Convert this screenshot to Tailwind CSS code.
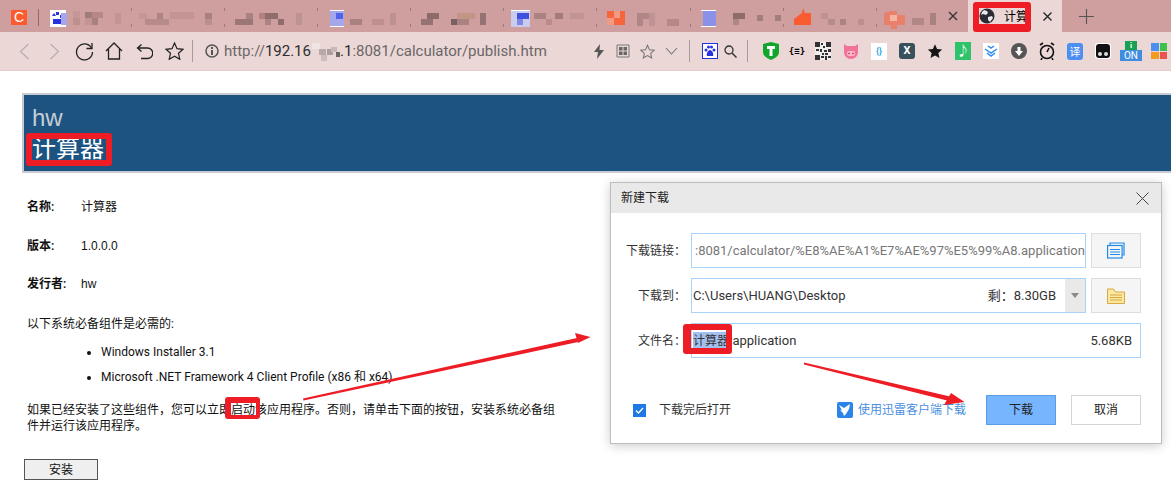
<!doctype html>
<html lang="zh-CN">
  <head>
    <meta charset="UTF-8" />
    <title>计算器</title>
    <script src="https://cdn.jsdelivr.net/npm/@tailwindcss/browser@4"></script>
  </head>
  <body class="relative w-[1171px] h-[495px] overflow-hidden bg-white text-black font-['Roboto','Noto_Sans_CJK_SC',sans-serif]">
    <!-- Tab strip -->
    <div class="flex items-start h-[32px] bg-[#cf9e9e]">
      <div class="ml-[11px] mt-[10px] w-[16px] h-[15px] bg-[#fc5a2d] text-white text-[14px] leading-[15px] text-center font-['Liberation_Sans']">C</div>
      <div class="ml-[11px] mt-[9px] w-px h-[17px] bg-[#8f6a6a]"></div>
      <svg class="w-[929px] h-[32px] shrink-0" viewBox="39 0 929 32">
        <g fill="#b98c8c">
          <rect x="73" y="11" width="7" height="7" fill="#c49696"/><rect x="85" y="12" width="7" height="6" fill="#a17c7c"/><rect x="92" y="12" width="11" height="6" fill="#b58787"/><rect x="73" y="18" width="7" height="7" fill="#bd9090"/><rect x="85" y="18" width="7" height="7" fill="#c29494"/><rect x="92" y="18" width="6" height="7" fill="#a98080"/><rect x="115" y="13" width="6" height="11" fill="#c19595"/>
          <rect x="139" y="13" width="8" height="6" fill="#c39797"/><rect x="145" y="19" width="24" height="6" fill="#b88b8b"/><rect x="157" y="13" width="6" height="6" fill="#ad8585"/><rect x="170" y="12" width="24" height="7" fill="#c29494"/><rect x="205" y="13" width="7" height="6" fill="#a78080"/><rect x="205" y="19" width="7" height="6" fill="#bb8f8f"/>
          <rect x="235" y="19" width="18" height="6" fill="#9c7676"/><rect x="246" y="13" width="7" height="6" fill="#a98181"/><rect x="259" y="13" width="7" height="6" fill="#b58080"/><rect x="265" y="13" width="13" height="6" fill="#8f6d6d"/><rect x="265" y="19" width="6" height="6" fill="#ab8383"/><rect x="278" y="19" width="6" height="6" fill="#8f6d6d"/><rect x="296" y="13" width="6" height="12" fill="#bd9292"/>
          <rect x="350" y="19" width="12" height="6" fill="#a98181"/><rect x="372" y="19" width="12" height="6" fill="#bd8f8f"/><rect x="390" y="13" width="6" height="12" fill="#bd9191"/>
          <rect x="421" y="19" width="12" height="6" fill="#967272"/><rect x="427" y="13" width="12" height="6" fill="#8e6b6b"/><rect x="451" y="19" width="6" height="6" fill="#776060"/><rect x="457" y="13" width="18" height="6" fill="#c39585"/><rect x="457" y="19" width="12" height="6" fill="#ab8282"/><rect x="480" y="13" width="6" height="12" fill="#967373"/>
          <rect x="534" y="13" width="12" height="6" fill="#ab8282"/><rect x="546" y="19" width="6" height="6" fill="#b98b8b"/><rect x="555" y="13" width="8" height="6" fill="#a57c7c"/><rect x="570" y="13" width="14" height="6" fill="#c19494"/>
          <rect x="637" y="13" width="12" height="6" fill="#b08686"/><rect x="637" y="19" width="6" height="7" fill="#b08686"/><rect x="649" y="13" width="6" height="13" fill="#bd9393"/><rect x="667" y="19" width="12" height="7" fill="#b58888"/>
          <rect x="733" y="13" width="12" height="6" fill="#8e6c6c"/><rect x="733" y="19" width="6" height="6" fill="#b08787"/><rect x="757" y="15" width="6" height="6" fill="#a47e7e"/><rect x="775" y="15" width="6" height="6" fill="#a47e7e"/>
          <rect x="821" y="13" width="7" height="6" fill="#bf9292"/><rect x="828" y="19" width="7" height="6" fill="#b58b8b"/><rect x="840" y="19" width="6" height="6" fill="#ab8383"/><rect x="858" y="19" width="6" height="6" fill="#bb8f8f"/>
          <rect x="912" y="18" width="12" height="7" fill="#b18787"/><rect x="930" y="13" width="6" height="12" fill="#a88181"/>
        </g>
        <!-- tab separators, mostly blurred away -->
        <path d="M131.500 8v3M131.500 24v3M224.500 8v3M224.500 24v3M317.500 8v3M317.500 24v3M410.500 8v3M410.500 24v3M503.500 8v3M503.500 24v3M596.500 8v3M596.500 24v3M690.500 8v3M690.500 24v3M783.500 8v3M783.500 24v3M876.500 8v3M876.500 24v3" stroke="#9a7777" stroke-width="1" />
        <!-- baidu favicon -->
        <rect x="50" y="10" width="16" height="17" fill="#fff"/>
        <path d="M52 16l2-3 2 3zM56 12h3v3h-3zM60 15h3v3h-3zM53 19h8l1 5h-9z" fill="#2932e1"/>
        <rect x="61" y="13" width="6" height="12" fill="#a6a6ee"/>
        <!-- blue favicons -->
        <rect x="330" y="10" width="14" height="17" fill="#a4a8ea"/><rect x="330" y="10" width="14" height="1" fill="#fff"/><rect x="330" y="26" width="14" height="1" fill="#fff"/><rect x="336" y="13" width="7" height="6" fill="#5363e8"/>
        <rect x="511" y="11" width="19" height="16" fill="#c9ccee"/><rect x="511" y="10" width="19" height="1" fill="#fff"/><rect x="517" y="13" width="12" height="6" fill="#3f50dd"/><rect x="517" y="19" width="6" height="6" fill="#7d88e6"/>
        <rect x="703" y="11" width="13" height="15" fill="#8b90e8"/><rect x="701" y="10" width="15" height="1" fill="#fff"/><rect x="701" y="26" width="15" height="1" fill="#fff"/>
        <!-- orange favicons -->
        <rect x="607" y="11" width="18" height="14" fill="#f6653c"/><rect x="607" y="18" width="7" height="7" fill="#ef9b85"/><rect x="614" y="11" width="6" height="7" fill="#ef9b85"/>
        <path d="M794 19l8-6 1-5 2 5h6v12h-17z" fill="#fa5b30"/>
        <path d="M884 13l7-2h6v4h8v10h-8v4h-6v-4h-7z" fill="#e8806a"/><rect x="890" y="15" width="7" height="6" fill="#f5b3a4"/>
        <path d="M949 12l8 8M957 12l-8 8" stroke="#333" stroke-width="1.300" fill="none"/>
      </svg>
      <!-- Active tab -->
      <div class="w-[94px] h-[32px] shrink-0 bg-[#ead7d6] flex items-center">
        <svg class="ml-[11px] w-[16px] h-[16px]" viewBox="0 0 16 16"><circle cx="8" cy="8" r="7.500" fill="#2b2b33"/><path d="M5 2l3 1 1 2-2 2-3-1-2 1 1-3zM9 9l4-1 1 2-3 4-2-2z" fill="#e8e8ee"/></svg>
        <span class="ml-[9px] text-[12px] leading-none font-['Noto_Sans_CJK_SC']">计算</span>
        <svg class="ml-[15px] w-[9px] h-[9px]" viewBox="0 0 9 9"><path d="M.5.500l8 8M8.500.500l-8 8" stroke="#222" stroke-width="1.300"/></svg>
      </div>
      <svg class="ml-[17px] mt-[9px] w-[15px] h-[15px]" viewBox="0 0 15 15"><path d="M7.500 0v15M0 7.500h15" stroke="#555" stroke-width="1.100"/></svg>
    </div>

    <!-- Toolbar -->
    <div class="flex items-center h-[39px] bg-[#ead7d6] border-b border-[#e2cbcb]">
      <div class="flex items-center w-[192px] pl-[9px]">
        <span class="w-[30px] flex justify-center"><svg class="w-[11px] h-[17px]" viewBox="0 0 11 17" fill="none"><path d="M9.500 1l-8 7.500 8 7.500" stroke="#b9adad" stroke-width="1.200"/></svg></span>
        <span class="w-[30px] flex justify-center"><svg class="w-[11px] h-[17px]" viewBox="0 0 11 17" fill="none"><path d="M1.500 1l8 7.500-8 7.500" stroke="#b9adad" stroke-width="1.200"/></svg></span>
        <span class="w-[30px] flex justify-center"><svg class="w-[19px] h-[19px]" viewBox="0 0 19 19" fill="none"><path d="M16.500 6A8 8 0 1 0 17.500 10" stroke="#222" stroke-width="1.300"/><path d="M17 1v5.500h-5.500" stroke="#222" stroke-width="1.300"/></svg></span>
        <span class="w-[30px] flex justify-center"><svg class="w-[18px] h-[18px]" viewBox="0 0 18 18" fill="none"><path d="M1 9l8-8 8 8M3.500 7v10h11V7" stroke="#222" stroke-width="1.300"/></svg></span>
        <span class="w-[30px] flex justify-center"><svg class="w-[17px] h-[17px]" viewBox="0 0 17 17" fill="none"><path d="M5.500 1.500L1.500 5l4 3.500M2 5h9.500a4.500 4.500 0 0 1 0 10.500H5" stroke="#222" stroke-width="1.300"/></svg></span>
        <span class="w-[30px] flex justify-center"><svg class="w-[19px] h-[18px]" viewBox="0 0 19 18" fill="none"><path d="M9.500 1l2.500 5.700 6 .6-4.500 4 1.300 6-5.300-3.100-5.300 3.100 1.300-6L1 7.300l6-.6z" stroke="#222" stroke-width="1.200"/></svg></span>
      </div>
      <div class="w-px h-[22px] bg-[#a89a9a]"></div>
      <svg class="ml-[12px] w-[14px] h-[14px]" viewBox="0 0 14 14"><circle cx="7" cy="7" r="6" fill="none" stroke="#555" stroke-width="1.500"/><rect x="6" y="6" width="2" height="5" fill="#555"/><rect x="6" y="3" width="2" height="2" fill="#555"/></svg>
      <div class="ml-[5px] flex items-center text-[15px] text-[#6b6666] whitespace-nowrap">
        <span>http://</span><span class="text-[#2d2d2d]">192.16</span>
        <svg class="w-[29px] h-[20px]" viewBox="0 0 29 20"><rect x="1" y="2" width="8" height="6" fill="#f1e4e4"/><rect x="8" y="8" width="7" height="6" fill="#b9aaaa"/><rect x="16" y="8" width="6" height="6" fill="#ad9d9d"/><rect x="10" y="14" width="6" height="6" fill="#cdbcbc"/><rect x="20" y="6" width="6" height="5" fill="#c8b9b9"/><rect x="25" y="11" width="4" height="5" fill="#6b6666"/></svg>
        <span class="text-[#2d2d2d]">.1</span><span>:8081/calculator/publish.htm</span>
      </div>
      <div class="flex items-center ml-auto pr-[4px]">
        <span class="w-[28px] flex justify-center"><svg class="w-[10px] h-[15px]" viewBox="0 0 10 15"><path d="M6 0L0 8h4l-1 7 7-9H5.500z" fill="#555"/></svg></span>
        <span class="w-[20px] flex justify-center"><svg class="w-[14px] h-[14px]" viewBox="0 0 14 14" fill="#666"><path d="M1 1h12v12H1z" fill="none" stroke="#777"/><rect x="3" y="3" width="3.500" height="3.500"/><rect x="7.500" y="3" width="3.500" height="3.500"/><rect x="3" y="7.500" width="3.500" height="3.500"/><rect x="7.500" y="7.500" width="3.500" height="3.500"/></svg></span>
        <span class="w-[28px] flex justify-center"><svg class="w-[15px] h-[15px]" viewBox="0 0 19 18" fill="none"><path d="M9.500 1l2.500 5.700 6 .6-4.500 4 1.300 6-5.300-3.100-5.300 3.100 1.300-6L1 7.300l6-.6z" stroke="#777" stroke-width="1.300"/></svg></span>
        <span class="w-[20px] flex justify-center"><svg class="w-[13px] h-[8px]" viewBox="0 0 13 8" fill="none"><path d="M1 1l5.500 6L12 1" stroke="#777" stroke-width="1.100"/></svg></span>
        <div class="ml-[8px] w-px h-[22px] bg-[#a89a9a]"></div>
        <span class="ml-[12px] w-[16px] h-[16px] border border-[#2233dd] bg-white flex items-center justify-center"><svg class="w-[12px] h-[12px]" viewBox="0 0 12 12" fill="#2932e1"><circle cx="2" cy="5" r="1.500"/><circle cx="4.500" cy="2" r="1.500"/><circle cx="7.500" cy="2" r="1.500"/><circle cx="10" cy="5" r="1.500"/><path d="M6 5c2 0 4 4 3 6H3c-1-2 1-6 3-6z"/></svg></span>
        <svg class="ml-[6px] w-[13px] h-[13px]" viewBox="0 0 13 13" fill="none"><circle cx="5" cy="5" r="4" stroke="#333" stroke-width="1.300"/><path d="M8 8l4.500 4.500" stroke="#333" stroke-width="1.500"/></svg>
        <div class="ml-[10px] w-px h-[22px] bg-[#a89a9a]"></div>
        <span class="ml-[15px] w-[16px] flex justify-center"><svg class="w-[16px] h-[18px]" viewBox="0 0 16 18"><path d="M8 0l8 2v8c0 4-4 6-8 8-4-2-8-4-8-8V2z" fill="#12a52c"/><path d="M4 4h8v3H9.500v7h-3V7H4z" fill="#fff"/></svg></span>
        <span class="ml-[8px] w-[20px] text-center text-[9px] font-bold font-['DejaVu_Sans_Mono'] leading-none">{≡}</span>
        <svg class="ml-[8px] w-[16px] h-[18px]" viewBox="0 0 16 18"><rect width="16" height="18" fill="#eee"/><path d="M0 0h5v5H0zM11 0h5v5h-5zM0 13h5v5H0zM6 1h2v2H6zM8 4h2v2H8zM1 7h3v2H1zM5 7h2v3H5zM9 8h3v2H9zM13 7h3v3h-3zM7 11h2v2H7zM10 11h3v2h-3zM6 14h3v2H6zM10 14h2v4h-2zM13 14h3v2h-3z" fill="#333"/></svg>
        <svg class="ml-[12px] w-[16px] h-[15px]" viewBox="0 0 16 15"><path d="M1 0l3 2h8l3-2v8c0 4-3 7-7 7s-7-3-7-7z" fill="#f0739a"/><rect x="4" y="7" width="8" height="5" rx="2" fill="#fbb4c8"/><circle cx="6" cy="9.500" r=".8" fill="#b33"/><circle cx="10" cy="9.500" r=".8" fill="#b33"/></svg>
        <span class="ml-[12px] w-[16px] h-[17px] bg-white text-[#2aa4e8] text-[9px] leading-[17px] text-center font-bold">{}</span>
        <span class="ml-[12px] w-[16px] h-[16px] rounded-[3px] bg-[#36505c] text-white text-[11px] leading-[16px] text-center font-bold">X</span>
        <svg class="ml-[12px] w-[16px] h-[16px]" viewBox="0 0 19 18"><path d="M9.500 1l2.500 5.700 6 .6-4.500 4 1.300 6-5.300-3.100-5.300 3.100 1.300-6L1 7.300l6-.6z" fill="#161616"/></svg>
        <span class="ml-[12px] w-[16px] h-[18px] bg-[#2ec36b] text-white text-[13px] leading-[18px] text-center">♪</span>
        <svg class="ml-[12px] w-[16px] h-[16px] bg-white" viewBox="0 0 16 16" fill="none" stroke="#2a8cf0" stroke-width="1.500"><path d="M5 3l3 2 3-2M2 6l6 4 6-4M4 10l4 3 4-3"/></svg>
        <span class="ml-[12px] w-[16px] h-[16px] rounded-full bg-[#555] flex justify-center items-center"><svg class="w-[8px] h-[9px]" viewBox="0 0 8 9"><path d="M2.500 0h3v4H8L4 9 0 4h2.500z" fill="#fff"/></svg></span>
        <svg class="ml-[12px] w-[16px] h-[18px]" viewBox="0 0 16 18" fill="none" stroke="#111" stroke-width="1.600"><circle cx="8" cy="10" r="6.500"/><path d="M8 10l2-4M1 3l3-2M15 3l-3-2M3 16l-1 2M13 16l1 2"/></svg>
        <span class="ml-[12px] w-[16px] h-[17px] rounded-[3px] bg-[#4d8ff0] text-white text-[11px] leading-[17px] text-center font-['Noto_Sans_CJK_SC']">译</span>
        <svg class="ml-[12px] w-[16px] h-[16px]" viewBox="0 0 16 16"><rect width="16" height="16" rx="3" fill="#fff"/><rect x="1" y="1" width="14" height="14" rx="3" fill="#111"/><circle cx="5" cy="11" r="2" fill="#ddd"/><circle cx="11" cy="11" r="2" fill="#ddd"/></svg>
        <span class="ml-[12px] w-[16px] flex flex-col items-center leading-none">
          <span class="w-[12px] h-[9px] bg-[#1aa053] text-white text-[8px] leading-[9px] text-center font-bold">i</span>
          <span class="w-[22px] h-[11px] shrink-0 bg-[#3f8de0] text-white text-[10px] leading-[11px] text-center">ON</span>
        </span>
        <span class="ml-[12px] w-[16px] h-[16px] grid grid-cols-2 gap-px">
          <span class="bg-[#4d8ff0]"></span><span class="bg-[#3cc14a]"></span><span class="bg-[#f39a1f]"></span><span class="bg-[#ef5350]"></span>
        </span>
      </div>
    </div>

    <!-- Publish page -->
    <div class="pl-[22px] pt-[22px] text-[12px] leading-[16px] text-[#111]">
      <div class="w-[1200px] h-[80px] bg-[#1c5380] border-2 border-[#c9c9d1] pl-[8px] pt-[7px]">
        <div class="text-[24px] leading-[31px] text-[#c6ccd5] font-['Liberation_Sans']">hw</div>
        <div class="text-[24px] leading-[32px] text-white">计算器</div>
      </div>
      <div class="pl-[5px]">
        <div class="flex mt-[26px]"><b class="w-[54px] font-semibold">名称:</b><span>计算器</span></div>
        <div class="flex mt-[23px]"><b class="w-[54px] font-semibold">版本:</b><span class="font-['Liberation_Sans']">1.0.0.0</span></div>
        <div class="flex mt-[22px]"><b class="w-[54px] font-semibold">发行者:</b><span class="font-['Liberation_Sans']">hw</span></div>
        <p class="mt-[24px]">以下系统必备组件是必需的:</p>
        <ul class="mt-[12px] ml-[74px] list-disc list-outside">
          <li>Windows Installer 3.1</li>
          <li class="mt-[9px]">Microsoft .NET Framework 4 Client Profile (x86 和 x64)</li>
        </ul>
        <p class="mt-[17px] w-[532px]">如果已经安装了这些组件，您可以立即启动该应用程序。否则，请单击下面的按钮，安装系统必备组件并运行该应用程序。</p>
      </div>
      <button class="mt-[25px] ml-[2px] w-[74px] h-[21px] bg-[#efefef] border border-[#555] text-[12px] leading-none">安装</button>
    </div>

    <!-- Download dialog -->
    <div class="absolute left-[610px] top-[182px] w-[552px] h-[262px] bg-white border border-[#bdbdbd] shadow-[0_2px_10px_rgba(0,0,0,0.2)] text-[12px] text-[#333]">
      <div class="flex items-center justify-between h-[30px] pl-[10px] pr-[12px] bg-[#e9e9e9]">
        <span class="text-[#222]">新建下载</span>
        <svg class="w-[13px] h-[13px]" viewBox="0 0 13 13"><path d="M.5.500l12 12M12.500.500l-12 12" stroke="#444" stroke-width="1"/></svg>
      </div>
      <div class="pt-[20px] pr-[19px] flex flex-col">
        <div class="flex items-center">
          <span class="w-[75px] text-right">下载链接：</span>
          <div class="ml-[5px] w-[395px] h-[35px] border border-[#a9d3fb] pl-[3px] flex items-center text-[13px] text-[#777] whitespace-nowrap overflow-hidden">:8081/calculator/%E8%AE%A1%E7%AE%97%E5%99%A8.application</div>
          <div class="ml-[5px] w-[50px] h-[35px] border border-[#ddd] bg-[#f5f5f5] flex items-center justify-center">
            <svg class="w-[18px] h-[17px]" viewBox="0 0 18 17" fill="none" stroke="#1f8ae8" stroke-width="1.200"><path d="M3 3V1h14v12h-2"/><rect x=".6" y="3.500" width="14.500" height="12.500" fill="#f5f5f5"/><path d="M3 7.500h10M3 10h10M3 12.500h10"/></svg>
          </div>
        </div>
        <div class="flex items-center mt-[10px]">
          <span class="w-[75px] text-right">下载到：</span>
          <div class="ml-[5px] w-[395px] h-[35px] border border-[#a9d3fb] pl-[1px] flex items-center text-[13px] whitespace-nowrap">
            <span>C:\Users\HUANG\Desktop</span>
            <span class="ml-auto mr-[9px]">剩：8.30GB</span>
            <span class="w-[20px] h-full bg-[#e9e9e9] flex items-center justify-center"><svg class="w-[8px] h-[5px]" viewBox="0 0 8 5"><path d="M0 0h8L4 5z" fill="#8a8a8a"/></svg></span>
          </div>
          <div class="ml-[5px] w-[50px] h-[35px] border border-[#ddd] bg-[#f5f5f5] flex items-center justify-center">
            <svg class="w-[18px] h-[16px]" viewBox="0 0 18 16"><path d="M.5 1h6l2 3h9v11.500H.500z" fill="#fbe7a4" stroke="#d9a93e"/><path d="M3 7h12M3 9.500h12M3 12h12" stroke="#d9a93e"/></svg>
          </div>
        </div>
        <div class="flex items-center mt-[10px]">
          <span class="w-[75px] text-right">文件名：</span>
          <div class="ml-[5px] w-[450px] h-[35px] border border-[#a9d3fb] pl-[1px] pr-[8px] flex items-center text-[13px] whitespace-nowrap">
            <span class="bg-[#a3bff0] text-[12px]">计算器</span><span>.application</span>
            <span class="ml-auto">5.68KB</span>
          </div>
        </div>
      </div>
      <div class="flex items-center mt-[37px] pr-[20px]">
        <span class="ml-[22px] w-[13px] h-[13px] bg-[#1e78e6] flex items-center justify-center"><svg class="w-[9px] h-[7px]" viewBox="0 0 9 7" fill="none"><path d="M1 3.500l2.500 2.500L8 1" stroke="#fff" stroke-width="1.300"/></svg></span>
        <span class="ml-[13px]">下载完后打开</span>
        <svg class="ml-auto w-[16px] h-[16px]" viewBox="0 0 16 16"><rect width="16" height="16" rx="2" fill="#2b84e8"/><path d="M2 3l5 3 6-4-1 5-3 5-2 2-1-3-3-3 2 .5z" fill="#fff"/></svg>
        <span class="ml-[5px] text-[#4a8fe0]">使用迅雷客户端下载</span>
        <button class="ml-[20px] w-[70px] h-[30px] bg-[#78b5ff] border border-[#5a9ce8] text-[#222]">下载</button>
        <button class="ml-[15px] w-[70px] h-[30px] bg-white border border-[#d5d5d5] text-[#222]">取消</button>
      </div>
    </div>

    <!-- Red callouts drawn over the screenshot -->
    <div class="absolute left-[973px] top-[2px] w-[58px] h-[30px] border-[6px] border-b-[8px] border-[#ee1c25] rounded-[3px]"></div>
    <div class="absolute left-[26px] top-[133px] w-[86px] h-[33px] border-[6px] border-[#ee1c25] rounded-[3px]"></div>
    <div class="absolute left-[225px] top-[397px] w-[35px] h-[22px] border-t-[6px] border-l-[6px] border-r-[4px] border-b-[4px] border-[#ee1c25] rounded-[3px]"></div>
    <div class="absolute left-[683px] top-[324px] w-[49px] h-[30px] border-[6px] border-l-[8px] border-[#ee1c25] rounded-[3px]"></div>
    <svg class="absolute left-0 top-0 w-[1171px] h-[495px] pointer-events-none" viewBox="0 0 1171 495">
      <path d="M303 398.500L577 338l1 4L303.500 400.500z" fill="#ee1c25"/>
      <path d="M590.500 337L575 333l3 10z" fill="#ee1c25"/>
      <path d="M804 362.500L950 396.500l-1 4.500L804 364.500z" fill="#ee1c25"/>
      <path d="M964.500 402L951 393l-7 12z" fill="#ee1c25"/>
    </svg>
  </body>
</html>
